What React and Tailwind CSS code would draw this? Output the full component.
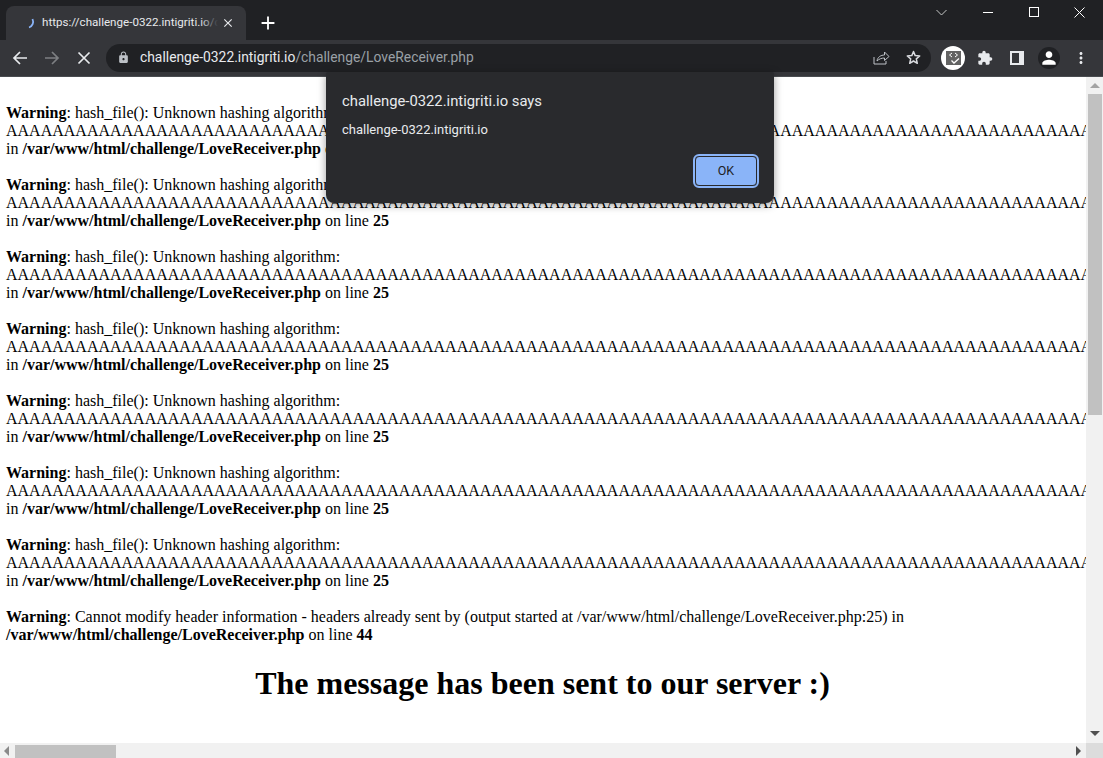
import React from "react";
import { MdClose, MdAdd, MdLock, MdExtension, MdPerson, MdMoreVert } from "react-icons/md";

const AS = "A".repeat(120);

function WarnBlock() {
  return (
    <p className="h-[72px] whitespace-nowrap">
      <b>Warning</b>: hash_file(): Unknown hashing algorithm:
      <br />
      {AS}
      <br />
      in <b>/var/www/html/challenge/LoveReceiver.php</b> on line <b>25</b>
    </p>
  );
}

function Tri({ dir, className }) {
  const pts = {
    up: "0,6 5,1 10,6",
    down: "0,1 5,6 10,1",
    left: "6,0 1,5 6,10",
    right: "1,0 6,5 1,10",
  }[dir];
  const v = dir === "up" || dir === "down";
  return (
    <svg width={v ? 10 : 7} height={v ? 7 : 10} viewBox={v ? "0 0 10 7" : "0 0 7 10"} className={className}>
      <polygon points={pts} fill="currentColor" />
    </svg>
  );
}

export default function App() {
  return (
    <div className="relative flex h-[758px] w-[1103px] flex-col overflow-hidden bg-white font-['Roboto',sans-serif]">
      {/* Title bar */}
      <div className="flex h-[40px] shrink-0 items-stretch bg-[#202124]">
        <div className="ml-[6px] mt-[6px] flex h-[34px] w-[240px] items-center rounded-t-[8px] bg-[#35363a] pl-[19px] pr-[10px]">
          <svg width="12" height="12" viewBox="0 0 12 12" className="mr-[5px] shrink-0">
            <path d="M7.5 2 C9 5.5 7.5 9.5 4 10.5" fill="none" stroke="#8ab4f8" strokeWidth="1.8" />
          </svg>
          <div className="relative w-[176px] overflow-hidden whitespace-nowrap text-[11.6px] text-[#e8eaed]">
            https://challenge-0322.intigriti.io/challenge/LoveReceiver.php
            <div className="absolute right-0 top-0 h-full w-[18px] bg-gradient-to-r from-transparent to-[#35363a]" />
          </div>
          <MdClose className="ml-[3px] shrink-0 text-[#e8eaed]" size={14} />
        </div>
        <div className="ml-[10px] flex w-[24px] items-center justify-center pt-[6px]">
          <MdAdd className="text-white" size={22} />
        </div>
        <div className="flex-1" />
        <div className="flex h-[24px] items-center">
          <svg width="11" height="7" viewBox="0 0 11 7" className="mr-[36px]">
            <path d="M0.5 1 L5.5 6 L10.5 1" fill="none" stroke="#c4c7c5" strokeWidth="1" />
          </svg>
          <div className="mr-[36px] h-px w-[10px] bg-white" />
          <div className="mr-[35px] h-[10px] w-[10px] border border-white" />
          <svg width="11" height="11" viewBox="0 0 11 11" className="mr-[18px]">
            <path d="M0.5 0.5 L10.5 10.5 M10.5 0.5 L0.5 10.5" fill="none" stroke="#fff" strokeWidth="1" />
          </svg>
        </div>
      </div>

      {/* Toolbar */}
      <div className="flex h-[37px] shrink-0 items-center border-b border-b-[#494c50] bg-[#35363a] pb-px">
        <div className="flex w-[106px] shrink-0 items-center">
          <svg width="16" height="14" viewBox="0 0 16 14" className="ml-[12px]">
            <path d="M15 7 H2 M8 1 L2 7 L8 13" fill="none" stroke="#e8eaed" strokeWidth="1.7" />
          </svg>
          <svg width="16" height="14" viewBox="0 0 16 14" className="ml-[16px]">
            <path d="M1 7 H14 M8 1 L14 7 L8 13" fill="none" stroke="#7d7f82" strokeWidth="1.7" />
          </svg>
          <svg width="14" height="14" viewBox="0 0 14 14" className="ml-[17px]">
            <path d="M1.5 1.5 L12.5 12.5 M12.5 1.5 L1.5 12.5" fill="none" stroke="#e8eaed" strokeWidth="1.7" />
          </svg>
        </div>
        <div className="flex h-[28px] w-[825px] shrink-0 items-center rounded-full bg-[#202124] pl-[11px] pr-[10px]">
          <MdLock className="shrink-0 text-[#bdc1c6]" size={13} />
          <div className="ml-[10px] flex-1 whitespace-nowrap text-[13.85px] text-[#e8eaed]">
            challenge-0322.intigriti.io<span className="text-[#9aa0a6]">/challenge/LoveReceiver.php</span>
          </div>
          <svg width="17" height="15" viewBox="0 0 17 15" className="mr-[16px] shrink-0">
            <path d="M1 7 V14 H13 V11 M4 11 C4.5 7 8 5 11.5 5 V2 L16 6.5 L11.5 10.5 V8 C8.5 8 6 9 4 11 Z" fill="none" stroke="#bdc1c6" strokeWidth="1" />
          </svg>
          <svg width="15" height="15" viewBox="0 0 15 15" className="shrink-0">
            <path d="M7.5 1.5 L9.2 5.6 L13.7 6 L10.3 8.9 L11.3 13.3 L7.5 11 L3.7 13.3 L4.7 8.9 L1.3 6 L5.8 5.6 Z" fill="none" stroke="#dadce0" strokeWidth="1.5" strokeLinejoin="round" />
          </svg>
        </div>
        <div className="ml-[10px] flex h-[24px] w-[24px] shrink-0 items-center justify-center rounded-full bg-white">
          <svg width="15" height="14" viewBox="0 0 15 14">
            <rect width="15" height="14" fill="#636363" />
            <path d="M6 2 L3.5 4 L6 6 M9 2 L11.5 4 L9 6" fill="none" stroke="#fff" strokeWidth="1" />
            <path d="M5.5 9.5 L8 12 L13 7.5" fill="none" stroke="#fff" strokeWidth="1.3" />
          </svg>
        </div>
        <MdExtension className="ml-[12px] shrink-0 text-[#e8eaed]" size={16} />
        <div className="ml-[17px] h-[14px] w-[14px] shrink-0 border-[2px] border-r-[5px] border-[#e8eaed]" />
        <div className="ml-[14px] flex h-[22px] w-[22px] shrink-0 items-center justify-center rounded-full bg-[#202124]">
          <MdPerson className="text-white" size={20} />
        </div>
        <MdMoreVert className="ml-[12px] shrink-0 text-[#e8eaed]" size={18} />
      </div>

      {/* Page */}
      <div className="flex min-h-0 flex-1">
        <div className="min-w-0 flex-1 overflow-hidden pl-[6px] pt-[27px] font-['Liberation_Serif',serif] text-[16px] leading-[18px] text-black">
          <WarnBlock />
          <WarnBlock />
          <WarnBlock />
          <WarnBlock />
          <WarnBlock />
          <WarnBlock />
          <WarnBlock />
          <p className="whitespace-nowrap">
            <b>Warning</b>: Cannot modify header information - headers already sent by (output started at /var/www/html/challenge/LoveReceiver.php:25) in
            <br />
            <b>/var/www/html/challenge/LoveReceiver.php</b> on line <b>44</b>
          </p>
          <h1 className="mt-[21px] pr-[7px] text-center text-[32px] font-bold leading-[37px]">The message has been sent to our server :)</h1>
        </div>
        {/* vertical scrollbar */}
        <div className="flex w-[17px] shrink-0 flex-col items-center bg-[#f1f1f1]">
          <Tri dir="up" className="mt-[5px] text-[#a3a3a3]" />
          <div className="mt-[5px] h-[321px] w-[14px] bg-[#c1c1c1]" />
          <div className="flex-1" />
          <Tri dir="down" className="mb-[6px] text-[#505050]" />
        </div>
      </div>
      {/* horizontal scrollbar */}
      <div className="flex h-[15px] shrink-0 items-center bg-[#f1f1f1]">
        <Tri dir="left" className="ml-[3px] text-[#8a8a8a]" />
        <div className="ml-[5px] mt-[2px] h-[13px] w-[101px] bg-[#c1c1c1]" />
        <div className="flex-1" />
        <Tri dir="right" className="mr-[4px] text-[#505050]" />
        <div className="h-full w-[17px] bg-[#dcdcdc]" />
      </div>

      {/* Alert dialog */}
      <div className="absolute left-[326px] top-[72px] flex h-[131px] w-[448px] flex-col rounded-b-[8px] rounded-t-[2px] bg-[#292a2d] px-[16px] shadow-[0_2px_8px_rgba(0,0,0,0.4)]">
        <div className="mt-[20px] text-[14.8px] leading-[18px] text-[#e8eaed]">challenge-0322.intigriti.io says</div>
        <div className="mt-[12px] text-[13px] leading-[16px] text-[#e8eaed]">challenge-0322.intigriti.io</div>
        <div className="mt-[18px] flex justify-end">
          <div className="mr-[1px] flex h-[30px] w-[62px] items-center justify-center rounded-[4px] border-[1px] border-[#292a2d] bg-[#8ab4f8] text-[12.5px] font-normal text-[#202124] outline outline-[2px] outline-[#8ab4f8]">
            OK
          </div>
        </div>
      </div>
    </div>
  );
}
